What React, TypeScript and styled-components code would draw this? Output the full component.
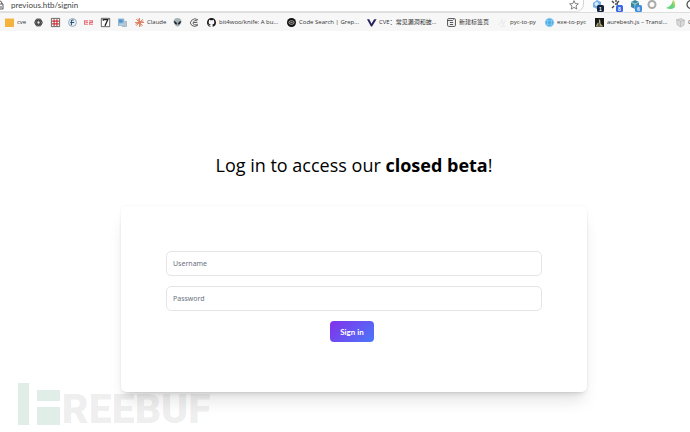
import React from "react";
import styled, { createGlobalStyle } from "styled-components";

const GlobalStyle = createGlobalStyle`
  *, *::before, *::after { box-sizing: border-box; }
  html, body, #root { height: 100%; }
  body {
    margin: 0;
    overflow: hidden;
    background: #fff;
    color: #000;
    font-family: "Open Sans", "Noto Sans CJK SC", sans-serif;
  }
`;

const Page = styled.div`
  position: relative;
  min-height: 100%;
  overflow: hidden;
`;

const AddressBar = styled.header`
  display: flex;
  align-items: flex-start;
  height: 13px;
  background: #fcfcfc;
  border-bottom: 1px solid #dedede;
`;

const AddressField = styled.div`
  display: flex;
  flex: 1;
  align-items: flex-start;
  height: 12px;
  padding-right: 4px;
  background: #fff;
  border-right: 1px solid #d4d4d4;
  border-bottom: 1px solid #e2e2e2;
  border-bottom-right-radius: 8px;
`;

const AddressInput = styled.input`
  flex: 1;
  min-width: 0;
  height: 10px;
  padding: 0 0 0 7px;
  border: 0;
  outline: 0;
  background: transparent;
  color: #444;
  font: 8px/10px Lato, sans-serif;
`;

const IconButton = styled.button`
  display: block;
  flex: none;
  padding: 0;
  border: 0;
  background: transparent;
  line-height: 0;
`;

const Extensions = styled.div`
  display: flex;
  flex: none;
  gap: 7px;
  width: 106px;
  padding-left: 8px;
  overflow: hidden;
`;

const BookmarkBar = styled.nav`
  display: flex;
  align-items: center;
  height: 18px;
  padding-left: 5px;
  overflow: hidden;
  background: #f7f7f7;
`;

const Bookmark = styled.a<{ $width: number }>`
  display: flex;
  flex: none;
  align-items: center;
  gap: 3px;
  width: ${(p) => p.$width}px;
  color: #333;
  font-size: 6px;
  line-height: 10px;
  text-decoration: none;
  white-space: nowrap;
`;

const Glyph = styled.svg<{ $size?: number }>`
  display: block;
  flex: none;
  width: ${(p) => p.$size ?? 9}px;
  height: ${(p) => p.$size ?? 9}px;
  overflow: visible;
`;

const Main = styled.main`
  display: flex;
  flex-direction: column;
  align-items: center;
  padding: 119px 103px 40px 121px;
`;

const Title = styled.h1`
  margin: 0;
  font-size: 18px;
  font-weight: 400;
  line-height: 30px;
  white-space: nowrap;
`;

const Card = styled.form`
  display: flex;
  flex-direction: column;
  align-items: center;
  gap: 10px;
  width: 100%;
  margin-top: 26px;
  padding: 45px 45px 50px;
  border-radius: 5px;
  background: #fff;
  box-shadow: 0 0 2px rgba(0, 0, 0, 0.08), 0 12px 15px -3px rgba(0, 0, 0, 0.1),
    0 4px 6px -4px rgba(0, 0, 0, 0.2);
`;

const Field = styled.input`
  width: 100%;
  height: 25px;
  padding: 0 6px;
  border: 1px solid #e4e5e8;
  border-radius: 5px;
  outline: 0;
  background: #fff;
  color: #111;
  font: 7px/12px "Noto Sans", sans-serif;

  &::placeholder {
    color: #6b7280;
    opacity: 1;
  }
`;

const SubmitButton = styled.button`
  height: 21px;
  margin-right: 4px;
  padding: 0 10px;
  border: 0;
  border-radius: 4px;
  background: linear-gradient(135deg, #8330ea, #4a78fa);
  color: #fff;
  font: 700 8px/12px Lato, sans-serif;
`;

const Watermark = styled.div`
  position: absolute;
  bottom: 7px;
  left: 18px;
  display: flex;
  align-items: flex-end;
  gap: 2px;
  pointer-events: none;
`;

const WatermarkMark = styled.svg`
  display: block;
  width: 42px;
  height: 42px;
`;

const WatermarkText = styled.span`
  color: rgba(0, 0, 0, 0.08);
  font-family: Roboto, sans-serif;
  font-size: 41px;
  font-weight: 900;
  line-height: 32px;
`;

const icons: Record<string, React.ReactNode> = {
  folder: <path d="M0 1h16v15H0z" fill="#f3b33d" />,
  gpt: (
    <g fill="none" stroke="#333" strokeWidth="1.5">
      <circle cx="8" cy="8" r="2.6" />
      <ellipse cx="8" cy="8" rx="7" ry="4" />
      <ellipse cx="8" cy="8" rx="7" ry="4" transform="rotate(60 8 8)" />
      <ellipse cx="8" cy="8" rx="7" ry="4" transform="rotate(120 8 8)" />
    </g>
  ),
  grid: (
    <g fill="none">
      <path d="M.7.7h14.6v14.6H.7z" fill="#fff" stroke="#333" strokeWidth="1.3" />
      <path d="M5.5 2v12M10.5 2v12M2 5.5h12M2 10.5h12" stroke="#c82e35" strokeWidth="2" />
    </g>
  ),
  compass: (
    <g fill="none" stroke="#7896aa" strokeWidth="1.3">
      <circle cx="8" cy="8" r="7" fill="#e7eff4" />
      <path d="M6 13V6q0-3 4-2M4 8h7" stroke="#254e72" strokeWidth="1.8" />
    </g>
  ),
  red: (
    <g fill="none" stroke="#e8707a" strokeWidth="2">
      <path d="M7 5H1v6h6M3 8h4M9 5h6v3h-5v3h6" />
    </g>
  ),
  seven: (
    <g fill="none" stroke="#222">
      <path d="M.6.6h14.8v14.8H.6z" fill="#fff" strokeWidth="1.2" />
      <path d="M4 5V3h8L7 14" strokeWidth="2.3" />
    </g>
  ),
  doc: (
    <g>
      <path d="M0 1h11v13H0z" fill="#8fb5d3" />
      <path d="M2 3h6v5H2z" fill="#4c91cd" />
      <path d="M11 6h4v9H7" fill="#b9c7d1" stroke="#7896ad" />
      <path d="M2 11h7" stroke="#fff" />
    </g>
  ),
  claude: (
    <path
      d="M8 0v16M0 8h16M2.3 2.3l11.4 11.4M2.3 13.7L13.7 2.3M5 .8l6 14.4M.8 11l14.4-6"
      stroke="#d97a5c"
      strokeWidth="1.6"
    />
  ),
  alien: (
    <g>
      <path d="M1 6c0-8 14-8 14 0 0 4-4 9-7 9S1 10 1 6z" fill="#a5b1b5" />
      <path d="M2 6q4 0 5 5-4 0-5-5zM14 6q-4 0-5 5 4 0 5-5z" fill="#172126" stroke="#172126" />
    </g>
  ),
  c: (
    <g fill="none" stroke="#444" strokeWidth="1.5">
      <path d="M14 3Q8-1 3 4t0 9q5 4 11 0M13 5Q8 3 6 7t2 5q3 1 6-1M7 8h6" />
    </g>
  ),
  github: (
    <path
      fill="#181818"
      d="M8 0C3.58 0 0 3.58 0 8c0 3.54 2.29 6.53 5.47 7.59.4.07.55-.17.55-.38v-1.34c-2.23.48-2.7-1.07-2.7-1.07-.36-.92-.89-1.17-.89-1.17-.73-.5.05-.49.05-.49.8.06 1.23.83 1.23.83.71 1.22 1.87.87 2.33.66.07-.52.28-.87.5-1.07-1.77-.2-3.64-.89-3.64-3.95 0-.87.31-1.59.82-2.15-.08-.2-.36-1.02.08-2.12 0 0 .67-.21 2.2.82a7.6 7.6 0 014 0c1.53-1.04 2.2-.82 2.2-.82.44 1.1.16 1.92.08 2.12.51.56.82 1.27.82 2.15 0 3.07-1.87 3.75-3.65 3.95.29.25.54.73.54 1.48v2.19c0 .21.15.46.55.38A8 8 0 0016 8c0-4.42-3.58-8-8-8z"
    />
  ),
  grep: (
    <g>
      <circle cx="8" cy="8" r="8" fill="#111" />
      <rect x="3.5" y="5" width="9" height="6" rx="3" fill="none" stroke="#e5e5e5" strokeWidth="1.3" />
      <path d="M6 8h4" stroke="#fff" />
    </g>
  ),
  vee: <path d="M0 2h4l4 8 3-5 2-3h4L9 15H7z" fill="#25235d" />,
  page: (
    <g fill="none" stroke="#444" strokeWidth="1.6">
      <rect x="1" y="1" width="14" height="14" rx="2" />
      <path d="M1 4.5h9l2-2M5 8h6M5 11.5h6" />
    </g>
  ),
  faint: <path d="M2 13L7 3l2 9 5-9M5 15h8" fill="none" stroke="#e6e6e6" strokeWidth="1.6" />,
  globe: (
    <g fill="none" stroke="#a4d8f7">
      <circle cx="8" cy="8" r="7.7" fill="#4baae1" />
      <ellipse cx="8" cy="8" rx="3.7" ry="7.5" />
      <path d="M1 5h14M1 11h14" />
    </g>
  ),
  tower: (
    <g>
      <path d="M0 0h16v16H0z" fill="#171815" />
      <path d="M1 15l4-7 2 2V3l2-1 1 8 5 5z" fill="#b7b28a" />
      <path d="M7 7l3 7H4z" fill="#656647" />
    </g>
  ),
  cube: (
    <g stroke="#aaa">
      <path d="M1 3l8-2 6 3-1 9-6 3-6-4z" fill="#dadada" />
      <path d="M1 3l7 3 7-2M8 6v9" fill="none" />
    </g>
  ),
};

const bookmarks = [
  { icon: "folder", label: "cve", width: 29 },
  { icon: "gpt", width: 17 },
  { icon: "grid", width: 17 },
  { icon: "compass", width: 16 },
  { icon: "red", width: 17 },
  { icon: "seven", width: 17 },
  { icon: "doc", width: 17 },
  { icon: "claude", label: "Claude", width: 38 },
  { icon: "alien", width: 17 },
  { icon: "c", width: 17 },
  { icon: "github", label: "bit4woo/knife: A bu...", width: 80 },
  { icon: "grep", label: "Code Search | Grep...", width: 80 },
  { icon: "vee", label: "CVE：常见漏洞和披...", width: 80 },
  { icon: "page", label: "新建标签页", width: 51 },
  { icon: "faint", label: "pyc-to-py", width: 47 },
  { icon: "globe", label: "exe-to-pyc", width: 50 },
  { icon: "tower", label: "aurebesh.js – Transl...", width: 81 },
  { icon: "cube", label: "C", width: 24 },
];

const Badge = ({ fill, value }: { fill: string; value: string }) => (
  <g>
    <rect x="5" y="5" width="7" height="7" rx="1.5" fill={fill} />
    <text x="8.5" y="10.5" textAnchor="middle" fontSize="5" fontWeight="700" fill="#fff">
      {value}
    </text>
  </g>
);

const extensions = [
  {
    name: "Cookie tool",
    art: (
      <g>
        <path d="M1 3l4-3 4 2v5L5 9 1 7z" fill="#73aee4" />
        <circle cx="4.5" cy="4" r="2" fill="#d6eafa" />
        <Badge fill="#13213a" value="1" />
      </g>
    ),
  },
  {
    name: "Proxy switcher",
    art: (
      <g>
        <path d="M1 1l2 2M8 1L6 3M1 8l2-2M5 0v2M4 4h3" stroke="#444" strokeWidth="1.4" />
        <Badge fill="#3768e8" value="8" />
      </g>
    ),
  },
  {
    name: "Page analyser",
    art: (
      <g>
        <path d="M1 2l4-2 4 2v5L5 9 1 7z" fill="#37899b" />
        <path d="M1 2l4 2 4-2M5 4v5" stroke="#a8d4dc" fill="none" />
        <Badge fill="#3f8edd" value="6" />
      </g>
    ),
  },
  {
    name: "Recorder",
    art: <circle cx="3" cy="4.5" r="3.5" fill="none" stroke="#aaa" strokeWidth="2" />,
  },
  {
    name: "Leaf",
    art: (
      <g>
        <path d="M-2 8Q4 6 5 0q4 6 1 8Q3 10-2 8z" fill="#64d47d" />
        <path d="M5 0l2 2-1 6z" fill="#e1d45d" />
      </g>
    ),
  },
  {
    name: "Extensions",
    art: <circle cx="4" cy="4.5" r="4" fill="none" stroke="#444" strokeWidth="1.2" />,
  },
];

export default function App() {
  return (
    <Page>
      <GlobalStyle />
      <AddressBar>
        <AddressField>
          <IconButton type="button" aria-label="Site information">
            <Glyph $size={4} viewBox="0 0 4 4">
              <path d="M0 1q2 0 2 3M0 4h3v5H0M0 7h2" fill="none" stroke="#555" />
            </Glyph>
          </IconButton>
          <AddressInput aria-label="Address" defaultValue="previous.htb/signin" />
          <IconButton type="button" aria-label="Bookmark this page">
            <Glyph $size={10} viewBox="0 0 16 16">
              <path
                d="M8 1l2 4.7 5 .5-3.8 3.3 1.2 5L8 11.8l-4.4 2.7 1.2-5L1 6.2l5-.5z"
                fill="none"
                stroke="#666"
                strokeWidth="1.3"
              />
            </Glyph>
          </IconButton>
        </AddressField>
        <Extensions>
          {extensions.map((e) => (
            <IconButton key={e.name} type="button" aria-label={e.name}>
              <Glyph $size={12} viewBox="0 0 12 12">
                {e.art}
              </Glyph>
            </IconButton>
          ))}
        </Extensions>
      </AddressBar>
      <BookmarkBar aria-label="Bookmarks">
        {bookmarks.map((b) => (
          <Bookmark key={b.icon} href="#" $width={b.width} aria-label={b.label ?? b.icon}>
            <Glyph viewBox="0 0 16 16">{icons[b.icon]}</Glyph>
            {b.label}
          </Bookmark>
        ))}
      </BookmarkBar>
      <Main>
        <Title>
          Log in to access our <strong>closed beta</strong>!
        </Title>
        <Card onSubmit={(e) => e.preventDefault()}>
          <Field type="text" aria-label="Username" placeholder="Username" />
          <Field type="password" aria-label="Password" placeholder="Password" />
          <SubmitButton type="submit">Sign in</SubmitButton>
        </Card>
      </Main>
      <Watermark>
        <WatermarkMark viewBox="0 0 42 42">
          <path d="M0 0h11v42H0zM19 7h23v11H19zM19 24h23v18H19z" fill="#e0eee7" />
        </WatermarkMark>
        <WatermarkText>REEBUF</WatermarkText>
      </Watermark>
    </Page>
  );
}
